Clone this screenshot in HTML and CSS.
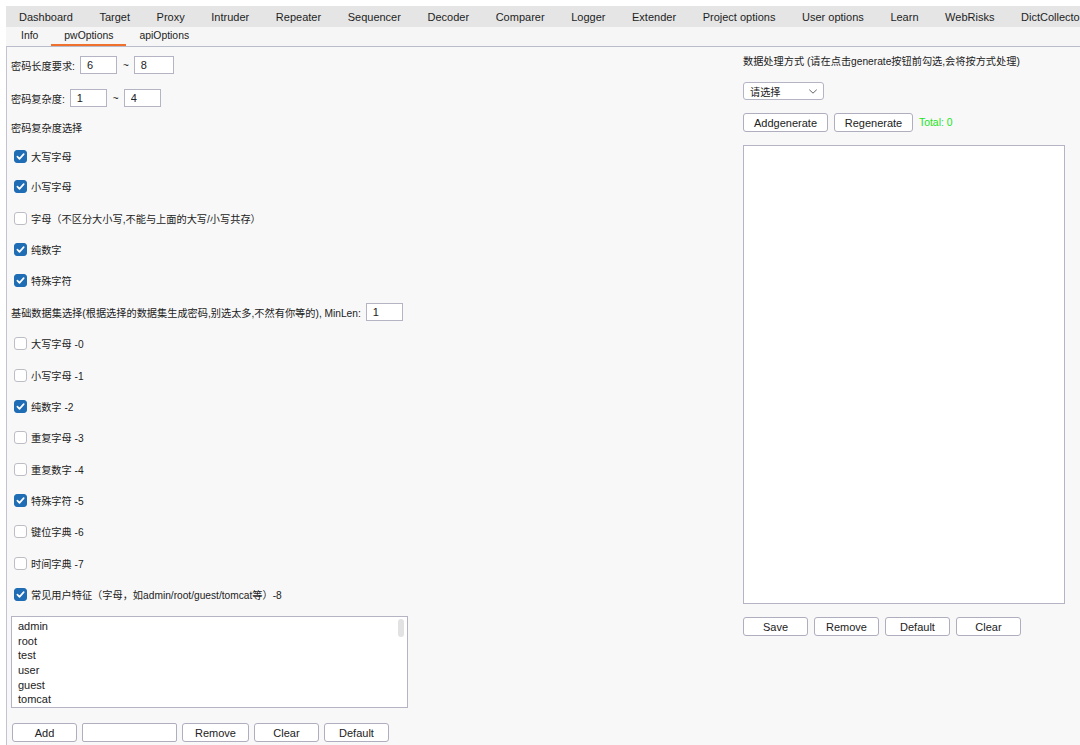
FILE: index.html
```html
<!DOCTYPE html>
<html lang="zh">
<head>
<meta charset="UTF-8">
<title>DictCollector</title>
<link rel="stylesheet" href="styles.css">
</head>
<body>
<div class="topbar">
  <a>Dashboard</a><a>Target</a><a>Proxy</a><a>Intruder</a><a>Repeater</a><a>Sequencer</a><a>Decoder</a><a>Comparer</a><a>Logger</a><a>Extender</a><a>Project options</a><a>User options</a><a>Learn</a><a>WebRisks</a><a>DictCollector</a>
</div>
<div class="subbar">
  <a>Info</a><a class="active">pwOptions</a><a>apiOptions</a>
</div>
<div class="panel">
  <div class="left">
    <div class="row r1"><span class="zh">密码长度要求:</span><input class="num" value="6"><span class="tilde">~</span><input class="num wide" value="8"></div>
    <div class="row r2"><span class="zh">密码复杂度:</span><input class="num" value="1"><span class="tilde">~</span><input class="num" value="4"></div>
    <div class="row r3"><span class="zh">密码复杂度选择</span></div>
    <label class="row r4 cbrow"><span class="cb on"><svg viewBox="0 0 12 12"><path d="M2.6 6.2l2.3 2.4 4.6-5.2"/></svg></span>大写字母</label>
    <label class="row cbrow"><span class="cb on"><svg viewBox="0 0 12 12"><path d="M2.6 6.2l2.3 2.4 4.6-5.2"/></svg></span>小写字母</label>
    <label class="row cbrow"><span class="cb"></span>字母（不区分大小写,不能与上面的大写/小写共存）</label>
    <label class="row cbrow"><span class="cb on"><svg viewBox="0 0 12 12"><path d="M2.6 6.2l2.3 2.4 4.6-5.2"/></svg></span>纯数字</label>
    <label class="row cbrow"><span class="cb on"><svg viewBox="0 0 12 12"><path d="M2.6 6.2l2.3 2.4 4.6-5.2"/></svg></span>特殊字符</label>
    <div class="row"><span class="zh">基础数据集选择(根据选择的数据集生成密码,别选太多,不然有你等的), MinLen:</span><input class="num" value="1"></div>
    <label class="row cbrow"><span class="cb"></span>大写字母 -0</label>
    <label class="row cbrow"><span class="cb"></span>小写字母 -1</label>
    <label class="row cbrow"><span class="cb on"><svg viewBox="0 0 12 12"><path d="M2.6 6.2l2.3 2.4 4.6-5.2"/></svg></span>纯数字 -2</label>
    <label class="row cbrow"><span class="cb"></span>重复字母 -3</label>
    <label class="row cbrow"><span class="cb"></span>重复数字 -4</label>
    <label class="row cbrow"><span class="cb on"><svg viewBox="0 0 12 12"><path d="M2.6 6.2l2.3 2.4 4.6-5.2"/></svg></span>特殊字符 -5</label>
    <label class="row cbrow"><span class="cb"></span>键位字典 -6</label>
    <label class="row cbrow"><span class="cb"></span>时间字典 -7</label>
    <label class="row cbrow"><span class="cb on"><svg viewBox="0 0 12 12"><path d="M2.6 6.2l2.3 2.4 4.6-5.2"/></svg></span>常见用户特征（字母，如admin/root/guest/tomcat等）-8</label>
    <div class="list">
      <div>admin</div>
      <div>root</div>
      <div>test</div>
      <div>user</div>
      <div>guest</div>
      <div>tomcat</div>
      <span class="thumb"></span>
    </div>
    <div class="btns">
      <button>Add</button><input class="addbox"><button class="b67">Remove</button><button>Clear</button><button>Default</button>
    </div>
  </div>
  <div class="right">
    <div class="rtitle zh">数据处理方式 (请在点击generate按钮前勾选,会将按方式处理)</div>
    <div class="select"><span class="zh">请选择</span><svg viewBox="0 0 12 8"><path d="M1.5 1.8l4.5 4.2 4.5-4.2"/></svg></div>
    <div class="btns gen">
      <button class="b85">Addgenerate</button><button class="b79">Regenerate</button><span class="total">Total: 0</span>
    </div>
    <div class="output"></div>
    <div class="btns save">
      <button>Save</button><button>Remove</button><button>Default</button><button>Clear</button>
    </div>
  </div>
</div>
</body>
</html>
```

FILE: styles.css
```css
*{
	margin:0;
	padding:0;
	box-sizing:border-box;
	}
body{
	width:1080px;
	height:745px;
	overflow:hidden;
	background:#fff;
	font-family:"Liberation Sans","Noto Sans CJK SC",sans-serif;
	font-size:11px;
	color:#222;
	padding-top:6px;
	}
.topbar{
	margin-left:6px;
	height:21px;
	background:#e5e5e5;
	display:flex;
	align-items:center;
	white-space:nowrap;
	font-size:11px;
	color:#1e1e1e;
	}
.topbar a{
	padding:0 13.3px;
	}
.topbar a:first-child{
	margin-left:-0.3px;
	}
.subbar{
	margin-left:6px;
	height:19px;
	background:#f6f6f6;
	display:flex;
	font-size:10.4px;
	}
.subbar a{
	padding:0 13px;
	line-height:17px;
	border-bottom:2px solid transparent;
	}
.subbar a:first-child{
	margin-left:2px;
	}
.subbar a.active{
	border-bottom-color:#f0712d;
	}
.panel{
	margin-left:6px;
	height:700px;
	background:#f8f8f8;
	border-top:1px solid #b9bccb;
	border-left:1px solid #c4c4cf;
	display:flex;
	}
.left{
	width:736px;
	padding-left:4px;
	}
.zh,
.cbrow{
	font-size:10.2px;
	}
.row{
	display:flex;
	align-items:center;
	height:31.4px;
	}
.r1{height:36px;}
.r2{height:30px;}
.r3{height:28px;}
.r4{height:30px;}
.cbrow{
	padding-left:3px;
	}
input{
	font-family:inherit;
	font-size:11px;
	color:#222;
	}
.num{
	width:37px;
	height:18px;
	margin-left:5px;
	border:1px solid #b4b4c4;
	background:#fff;
	padding-left:6px;
	outline:none;
	}
.num.wide{
	width:40px;
	}
.tilde{
	margin:0 0 0 6px;
	font-size:10px;
	}
.cb{
	width:13px;
	height:13px;
	border:1px solid #bdbdc4;
	border-radius:3px;
	background:#fff;
	margin-right:4px;
	display:flex;
	align-items:center;
	justify-content:center;
	}
.cb.on{
	background:#1f6db4;
	border-color:#1f6db4;
	}
.cb svg{
	width:11px;
	height:11px;
	}
.cb path{
	fill:none;
	stroke:#fff;
	stroke-width:1.8;
	stroke-linecap:round;
	stroke-linejoin:round;
	}
.list{
	position:relative;
	margin-top:6px;
	width:397px;
	height:92px;
	border:1px solid #b4b4c4;
	background:#fff;
	padding:1.5px 0 0 6px;
	line-height:14.7px;
	}
.thumb{
	position:absolute;
	right:3px;
	top:2px;
	width:6px;
	height:18px;
	border-radius:3px;
	background:#e2e2e2;
	}
.btns{
	display:flex;
	align-items:center;
	gap:5px;
	}
.left .btns{
	margin-top:15px;
	padding-left:1px;
	}
button{
	width:65px;
	height:19px;
	background:#fff;
	border:1px solid #aeaebe;
	border-radius:3px;
	font-family:inherit;
	font-size:11px;
	color:#222;
	}
button.b67{width:67px;}
.addbox{
	width:95px;
	height:19px;
	border:1px solid #aeaebe;
	border-radius:2px;
	background:#fff;
	}
.rtitle{
	height:30px;
	line-height:30px;
	}
.select{
	margin-top:5px;
	width:81px;
	height:18px;
	border:1px solid #b4b4c4;
	border-radius:3px;
	background:#fff;
	display:flex;
	align-items:center;
	justify-content:space-between;
	padding:0 5px 0 6px;
	font-size:11px;
	}
.select svg{
	width:10px;
	height:7px;
	}
.select path{
	fill:none;
	stroke:#666;
	stroke-width:1.2;
	}
.gen{
	margin-top:13px;
	gap:6px;
	}
button.b85{width:85px;}
button.b79{width:79px;}
.total{
	color:#22e322;
	font-size:10.4px;
	}
.output{
	margin-top:13px;
	width:322px;
	height:459px;
	background:#fff;
	border:1px solid #b4b4c4;
	}
.save{
	margin-top:13px;
	gap:6px;
	}
```
